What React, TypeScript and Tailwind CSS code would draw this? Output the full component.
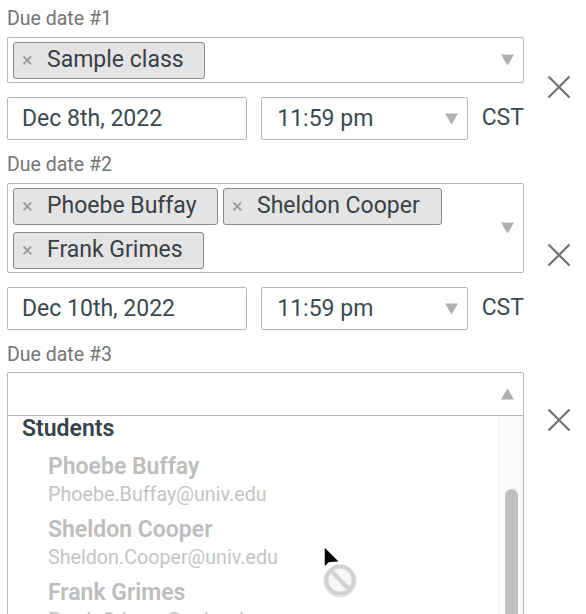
const font = { fontFamily: "Roboto, sans-serif" };

function Arrow({ up = false }: { up?: boolean }) {
  return (
    <svg width="13" height="12" viewBox="0 0 13 12" className="shrink-0">
      <path d={up ? "M6.5 0.5 L13 11.5 L0 11.5 Z" : "M0 0.5 L13 0.5 L6.5 11.5 Z"} fill="#b0b0b0" />
    </svg>
  );
}

function CloseX() {
  return (
    <svg width="24" height="24" viewBox="0 0 24 24" className="shrink-0">
      <path d="M1.5 1.5 L22.5 22.5 M22.5 1.5 L1.5 22.5" stroke="#757575" strokeWidth="2.3" fill="none" />
    </svg>
  );
}

function Chip({ label, className }: { label: string; className: string }) {
  return (
    <div className={"flex h-[37px] items-center rounded-[3px] border border-[#8a8a8a] bg-[#e4e4e4] text-[23px] text-[#3a4045] " + className}>
      <span className="ml-[8px] w-[25px] text-[20px] text-[#9a9a9a]">×</span>
      <span>{label}</span>
    </div>
  );
}

function DateRow({ date }: { date: string }) {
  return (
    <div className="mt-[14px] flex items-center text-[23px] text-[#3b4a52]">
      <div className="flex h-[43px] w-[241px] items-center rounded-[2px] border border-[#b5b5b5] pl-[14px] pt-[2px]">{date}</div>
      <div className="ml-[14px] flex h-[43px] w-[207px] items-center justify-between rounded-[2px] border border-[#b5b5b5] pl-[15px] pr-[9px]">
        <span className="pt-[2px]">11:59 pm</span>
        <Arrow />
      </div>
      <span className="ml-[14px]">CST</span>
    </div>
  );
}

function Label({ text }: { text: string }) {
  return <div className="h-[20px] text-[19.5px] leading-[20px] text-[#757575]">{text}</div>;
}

function Person({ name, email }: { name: string; email: string }) {
  return (
    <div className="pl-[40px]">
      <div className="h-[30px] text-[23px] leading-[30px] font-semibold text-[#bdbdbd]">{name}</div>
      <div className="h-[33px] text-[19.7px] leading-[26px] text-[#c4c4c4]">{email}</div>
    </div>
  );
}

export default function App() {
  return (
    <div style={font} className="relative h-[614px] w-[586px] overflow-hidden bg-white pl-[7px]">
      <div className="pt-[9px]">
        <Label text="Due date #1" />
      </div>
      <div className="mt-[8px] flex items-start">
        <div className="w-[517px]">
          <div className="flex h-[46px] w-[517px] items-center justify-between rounded-[2px] border border-[#b5b5b5] pl-[5px] pr-[9px]">
            <Chip label="Sample class" className="w-[192px]" />
            <Arrow />
          </div>
          <DateRow date="Dec 8th, 2022" />
        </div>
        <div className="ml-[23px] mt-[38px]"><CloseX /></div>
      </div>

      <div className="mt-[15px]"><Label text="Due date #2" /></div>
      <div className="mt-[8px] flex items-start">
        <div className="w-[517px]">
          <div className="flex h-[90px] w-[517px] items-center justify-between rounded-[2px] border border-[#b5b5b5] pl-[5px] pr-[9px]">
            <div className="flex flex-wrap gap-x-[5px] gap-y-[7px]">
              <Chip label="Phoebe Buffay" className="w-[205px]" />
              <Chip label="Sheldon Cooper" className="w-[219px]" />
              <Chip label="Frank Grimes" className="w-[191px]" />
            </div>
            <Arrow />
          </div>
          <DateRow date="Dec 10th, 2022" />
        </div>
        <div className="ml-[23px] mt-[60px]"><CloseX /></div>
      </div>

      <div className="mt-[15px]"><Label text="Due date #3" /></div>
      <div className="mt-[7px] flex items-start">
        <div className="w-[517px]">
          <div className="flex h-[44px] items-center justify-end rounded-t-[2px] border border-[#b5b5b5] pr-[9px]">
            <Arrow up />
          </div>
          <div className="flex h-[198px] border-x border-[#b5b5b5]">
            <div className="flex-1 overflow-hidden">
              <div className="h-[25px] pl-[14px] text-[23px] leading-[25px] font-semibold text-[#37434a]">Students</div>
              <div className="pt-[11px]">
                <Person name="Phoebe Buffay" email="Phoebe.Buffay@univ.edu" />
                <Person name="Sheldon Cooper" email="Sheldon.Cooper@univ.edu" />
                <Person name="Frank Grimes" email="Frank.Grimes@univ.edu" />
              </div>
            </div>
            <div className="w-[25px] border-l border-[#ececec] bg-[#fafafa] pl-[6px] pt-[73px]">
              <div className="h-[150px] w-[13px] rounded-full bg-[#c0c0c0]" />
            </div>
          </div>
        </div>
        <div className="ml-[23px] mt-[36px]"><CloseX /></div>
      </div>

      <svg width="44" height="58" viewBox="0 0 44 58" className="absolute left-[318px] top-[542px]">
        <path d="M6 4 L6 26 L11 21 L22 20 Z" fill="#000" stroke="#fff" strokeWidth="1.5" />
        <circle cx="22" cy="39" r="15.5" fill="none" stroke="#e4e4e4" strokeWidth="2" />
        <circle cx="22" cy="38" r="13.5" fill="#f6f6f6" stroke="#d2d2d2" strokeWidth="4" />
        <path d="M13 29 L31 47" stroke="#d2d2d2" strokeWidth="4" />
      </svg>
    </div>
  );
}
